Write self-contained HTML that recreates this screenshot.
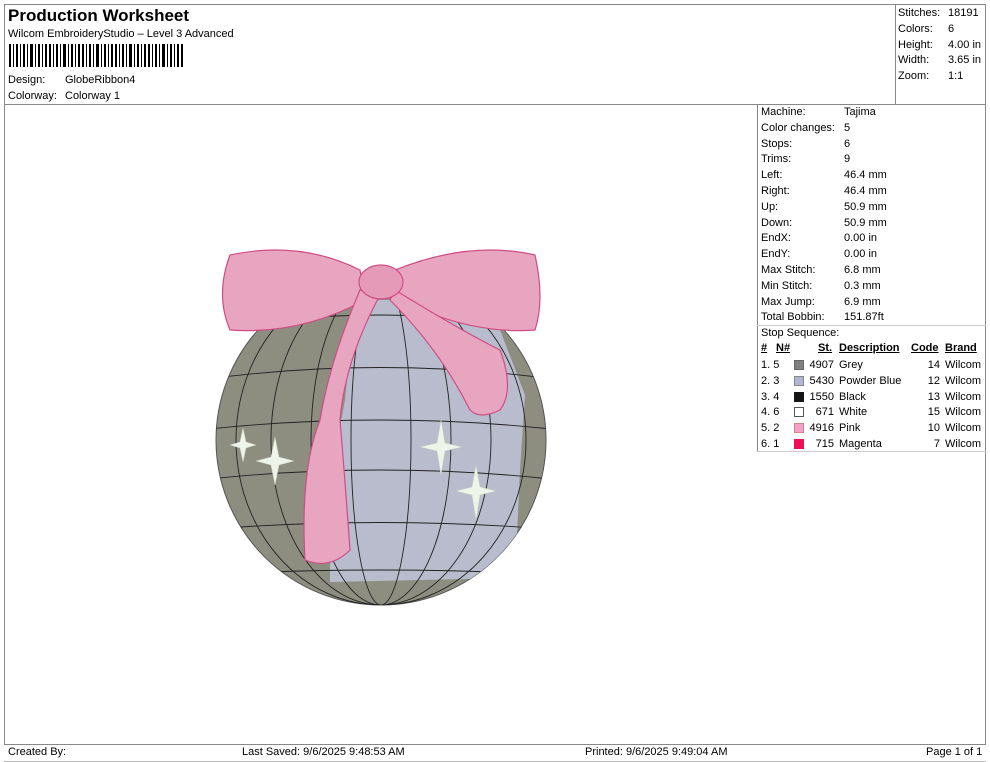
<!DOCTYPE html>
<html><head><style>
*{margin:0;padding:0;box-sizing:border-box}
body{width:990px;height:762px;background:#fff;font-family:"Liberation Sans",sans-serif;color:#000;position:relative;overflow:hidden;font-size:11px}
.a{position:absolute;white-space:nowrap}
.ln{position:absolute;background:#888}
</style></head><body>
<div class="ln" style="left:4px;top:4px;width:982px;height:1px"></div>
<div class="ln" style="left:4px;top:4px;width:1px;height:740px"></div>
<div class="ln" style="left:985px;top:4px;width:1px;height:740px"></div>
<div class="ln" style="left:4px;top:104px;width:982px;height:1px"></div>
<div class="ln" style="left:895px;top:4px;width:1px;height:100px"></div>
<div class="ln" style="left:757px;top:104px;width:1px;height:348px"></div>
<div class="ln" style="left:757px;top:325px;width:229px;height:1px;background:#ccc"></div>
<div class="ln" style="left:757px;top:451px;width:229px;height:1px;background:#ccc"></div>
<div class="ln" style="left:4px;top:744px;width:982px;height:1px"></div>
<div class="ln" style="left:4px;top:761px;width:982px;height:1px;background:#bbb"></div>

<div class="a" style="left:8px;top:6px;font-size:17px;font-weight:bold">Production Worksheet</div>
<div class="a" style="left:8px;top:28px">Wilcom EmbroideryStudio – Level 3 Advanced</div>
<svg class="a" style="left:9px;top:44px" width="174" height="23">
<g fill="#000">
<rect x="0" width="2" height="23"/><rect x="4" width="1" height="23"/><rect x="7" width="2" height="23"/><rect x="11" width="1" height="23"/><rect x="14" width="2" height="23"/><rect x="18" width="1" height="23"/><rect x="21" width="3" height="23"/><rect x="26" width="1" height="23"/><rect x="29" width="2" height="23"/><rect x="33" width="1" height="23"/><rect x="36" width="2" height="23"/><rect x="40" width="2" height="23"/><rect x="44" width="1" height="23"/><rect x="47" width="2" height="23"/><rect x="51" width="1" height="23"/><rect x="54" width="3" height="23"/><rect x="59" width="1" height="23"/><rect x="62" width="2" height="23"/><rect x="66" width="1" height="23"/><rect x="69" width="2" height="23"/><rect x="73" width="2" height="23"/><rect x="77" width="1" height="23"/><rect x="80" width="2" height="23"/><rect x="84" width="1" height="23"/><rect x="87" width="3" height="23"/><rect x="92" width="1" height="23"/><rect x="95" width="2" height="23"/><rect x="99" width="1" height="23"/><rect x="102" width="2" height="23"/><rect x="106" width="2" height="23"/><rect x="110" width="1" height="23"/><rect x="113" width="2" height="23"/><rect x="117" width="1" height="23"/><rect x="120" width="3" height="23"/><rect x="125" width="1" height="23"/><rect x="128" width="2" height="23"/><rect x="132" width="1" height="23"/><rect x="135" width="2" height="23"/><rect x="139" width="2" height="23"/><rect x="143" width="1" height="23"/><rect x="146" width="2" height="23"/><rect x="150" width="1" height="23"/><rect x="153" width="3" height="23"/><rect x="158" width="1" height="23"/><rect x="161" width="2" height="23"/><rect x="165" width="1" height="23"/><rect x="168" width="2" height="23"/><rect x="172" width="2" height="23"/>
</g></svg>
<div class="a" style="left:8px;top:74px">Design:</div><div class="a" style="left:65px;top:74px">GlobeRibbon4</div>
<div class="a" style="left:8px;top:90px">Colorway:</div><div class="a" style="left:65px;top:90px">Colorway 1</div>

<div class="a" style="left:898px;top:6px;line-height:15.8px">Stitches:<br>Colors:<br>Height:<br>Width:<br>Zoom:</div>
<div class="a" style="left:948px;top:6px;line-height:15.8px">18191<br>6<br>4.00 in<br>3.65 in<br>1:1</div>

<div class="a" style="left:761px;top:105px;line-height:15.8px">Machine:<br>Color changes:<br>Stops:<br>Trims:<br>Left:<br>Right:<br>Up:<br>Down:<br>EndX:<br>EndY:<br>Max Stitch:<br>Min Stitch:<br>Max Jump:<br>Total Bobbin:<br>Stop Sequence:</div>
<div class="a" style="left:844px;top:105px;line-height:15.8px">Tajima<br>5<br>6<br>9<br>46.4 mm<br>46.4 mm<br>50.9 mm<br>50.9 mm<br>0.00 in<br>0.00 in<br>6.8 mm<br>0.3 mm<br>6.9 mm<br>151.87ft</div>

<div class="a" style="left:761px;top:342px;font-weight:bold;text-decoration:underline">#</div>
<div class="a" style="left:776px;top:342px;font-weight:bold;text-decoration:underline">N#</div>
<div class="a" style="left:818px;top:342px;font-weight:bold;text-decoration:underline">St.</div>
<div class="a" style="left:839px;top:342px;font-weight:bold;text-decoration:underline">Description</div>
<div class="a" style="left:911px;top:342px;font-weight:bold;text-decoration:underline">Code</div>
<div class="a" style="left:945px;top:342px;font-weight:bold;text-decoration:underline">Brand</div>
<div class="a" style="left:761px;top:358px;line-height:15.8px">1. 5<br>2. 3<br>3. 4<br>4. 6<br>5. 2<br>6. 1</div>
<div class="a" style="left:794px;top:358px;width:12px">
<div style="height:15.8px"><span style="display:inline-block;width:10px;height:10px;background:#808080;border:1px solid #666;margin-top:2px"></span></div>
<div style="height:15.8px"><span style="display:inline-block;width:10px;height:10px;background:#b4b4d4;border:1px solid #888;margin-top:2px"></span></div>
<div style="height:15.8px"><span style="display:inline-block;width:10px;height:10px;background:#151515;margin-top:2px"></span></div>
<div style="height:15.8px"><span style="display:inline-block;width:10px;height:10px;background:#fff;border:1px solid #555;margin-top:2px"></span></div>
<div style="height:15.8px"><span style="display:inline-block;width:10px;height:10px;background:#f5a0c8;border:1px solid #c88;margin-top:2px"></span></div>
<div style="height:15.8px"><span style="display:inline-block;width:10px;height:10px;background:#ee1155;margin-top:2px"></span></div>
</div>
<div class="a" style="left:800px;top:358px;width:34px;text-align:right;line-height:15.8px">4907<br>5430<br>1550<br>671<br>4916<br>715</div>
<div class="a" style="left:839px;top:358px;line-height:15.8px">Grey<br>Powder Blue<br>Black<br>White<br>Pink<br>Magenta</div>
<div class="a" style="left:910px;top:358px;width:30px;text-align:right;line-height:15.8px">14<br>12<br>13<br>15<br>10<br>7</div>
<div class="a" style="left:945px;top:358px;line-height:15.8px">Wilcom<br>Wilcom<br>Wilcom<br>Wilcom<br>Wilcom<br>Wilcom</div>

<svg class="a" style="left:0;top:0" width="757" height="744">
<defs><clipPath id="c"><circle cx="381" cy="440" r="165"/></clipPath></defs>
<circle cx="381" cy="440" r="165" fill="#8d8e80" stroke="#555" stroke-width="1"/>
<g clip-path="url(#c)">
<path d="M355 300 L470 300 L500 330 L525 395 L520 470 L515 578 L330 582 L330 480 L345 400 Z" fill="#b8bccc"/>
<g fill="none" stroke="#222" stroke-width="0.9">
<ellipse cx="381" cy="440" rx="30" ry="165"/><ellipse cx="381" cy="440" rx="70" ry="165"/><ellipse cx="381" cy="440" rx="110" ry="165"/><ellipse cx="381" cy="440" rx="145" ry="165"/>
<path d="M200 330 Q381 300 560 330"/><path d="M200 380 Q381 355 560 380"/><path d="M200 430 Q381 410 560 430"/><path d="M200 480 Q381 460 560 480"/><path d="M200 530 Q381 515 560 530"/><path d="M200 575 Q381 565 560 575"/>
</g></g>
<path d="M230 255 Q300 240 360 270 L365 300 Q300 335 230 330 Q215 295 230 255 Z" fill="#e8a5bf" stroke="#d04c86" stroke-width="1.2"/>
<path d="M395 270 Q470 240 535 255 Q545 300 535 330 Q470 335 400 300 Z" fill="#e8a5bf" stroke="#d04c86" stroke-width="1.2"/>
<path d="M360 290 Q330 360 320 420 Q300 470 305 560 Q330 570 350 550 Q345 480 340 420 Q345 360 380 295 Z" fill="#e8a5bf" stroke="#d04c86" stroke-width="1.2"/>
<path d="M395 290 Q460 330 500 350 Q515 390 500 410 Q480 420 470 410 Q440 350 390 300 Z" fill="#e8a5bf" stroke="#d04c86" stroke-width="1.2"/>
<ellipse cx="381" cy="282" rx="22" ry="17" fill="#e59ab8" stroke="#d04c86" stroke-width="1.2"/>
<g fill="#eef5e8" stroke="#c8d0c0" stroke-width="0.5">
<path d="M243 428 L246 442 L256 445 L246 448 L243 462 L240 448 L230 445 L240 442 Z"/>
<path d="M275 437 L279 457 L294 461 L279 465 L275 485 L271 465 L256 461 L271 457 Z"/>
<path d="M441 420 L445 443 L462 447 L445 451 L441 475 L437 451 L420 447 L437 443 Z"/>
<path d="M476 465 L480 487 L496 491 L480 495 L476 520 L472 495 L456 491 L472 487 Z"/>
</g>
</svg>

<div class="a" style="left:8px;top:746px">Created By:</div>
<div class="a" style="left:242px;top:746px">Last Saved: 9/6/2025 9:48:53 AM</div>
<div class="a" style="left:585px;top:746px">Printed: 9/6/2025 9:49:04 AM</div>
<div class="a" style="left:926px;top:746px">Page 1 of 1</div>
</body></html>
